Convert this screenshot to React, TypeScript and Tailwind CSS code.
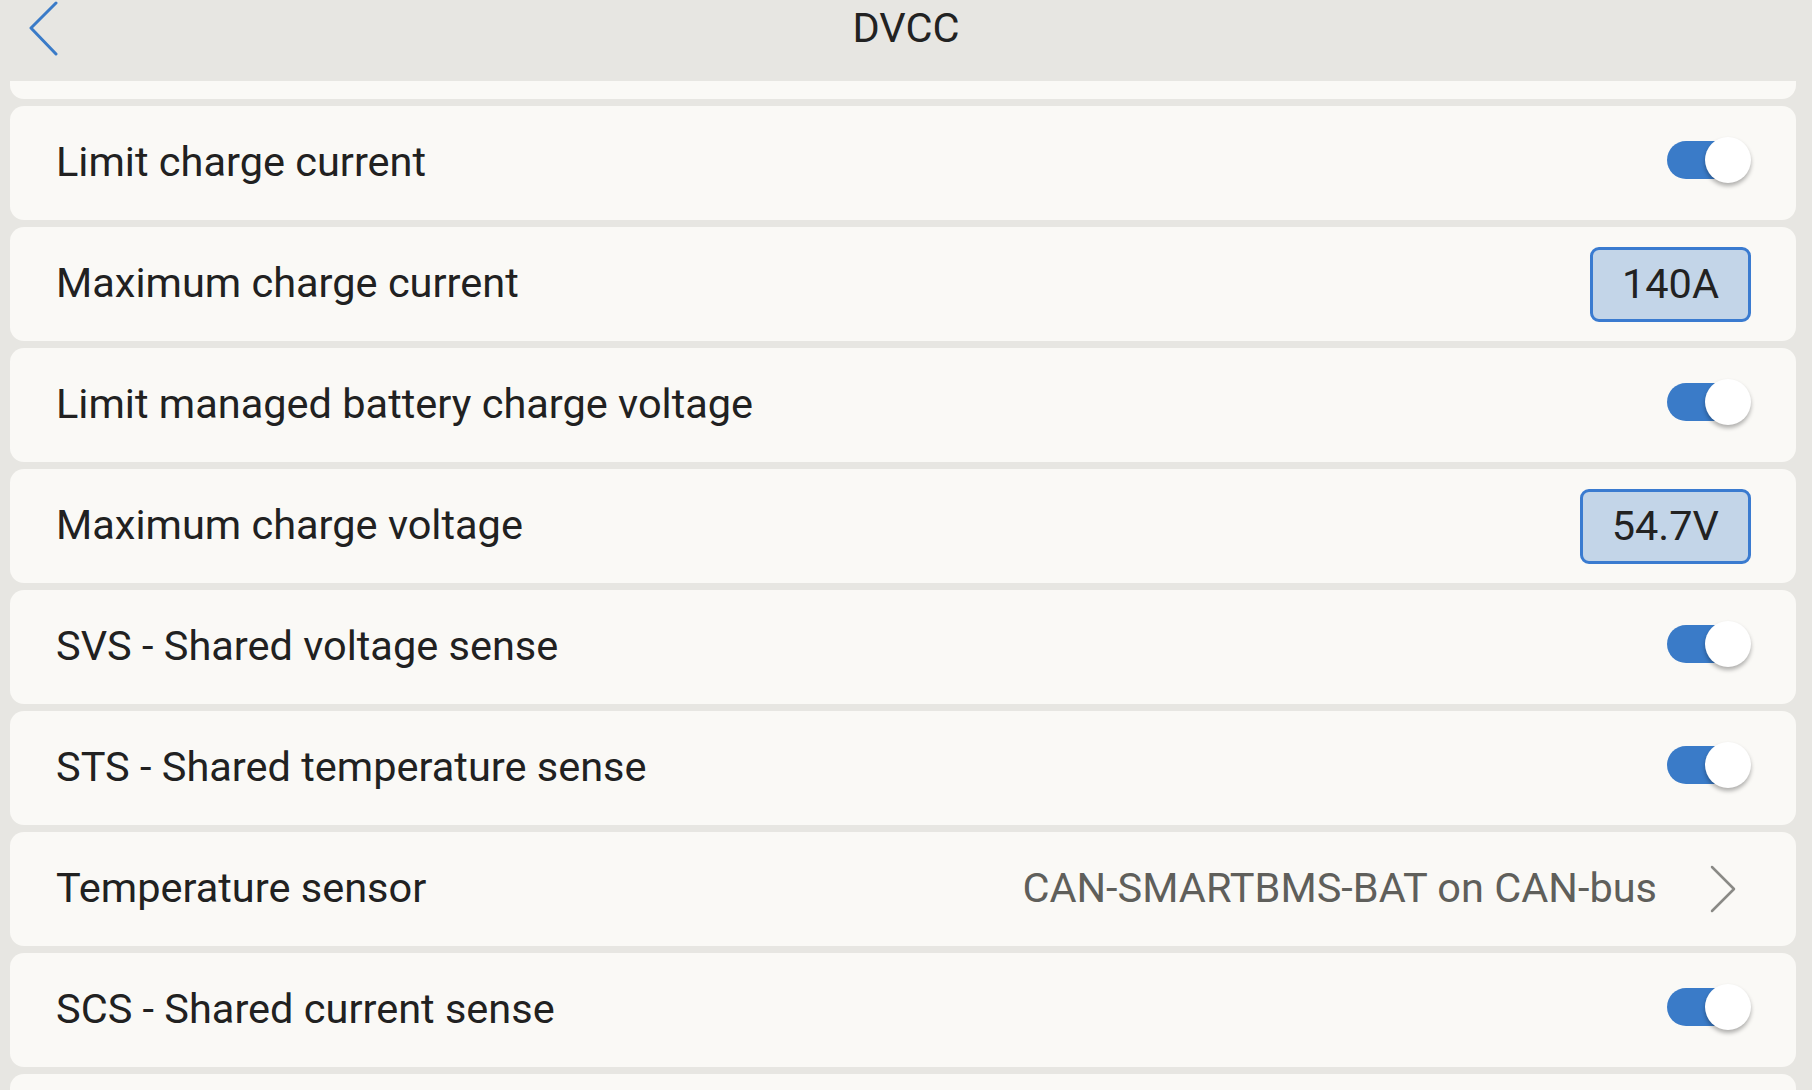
import React from 'react';

type Row =
  | { kind: 'toggle'; label: string; on: boolean }
  | { kind: 'value'; label: string; value: string }
  | { kind: 'link'; label: string; value: string };

const ROWS: Row[] = [
  { kind: 'toggle', label: 'Limit charge current', on: true },
  { kind: 'value', label: 'Maximum charge current', value: '140A' },
  { kind: 'toggle', label: 'Limit managed battery charge voltage', on: true },
  { kind: 'value', label: 'Maximum charge voltage', value: '54.7V' },
  { kind: 'toggle', label: 'SVS - Shared voltage sense', on: true },
  { kind: 'toggle', label: 'STS - Shared temperature sense', on: true },
  { kind: 'link', label: 'Temperature sensor', value: 'CAN-SMARTBMS-BAT on CAN-bus' },
  { kind: 'toggle', label: 'SCS - Shared current sense', on: true },
];

function Toggle({ on }: { on: boolean }) {
  return (
    <div className="relative w-[84px] h-[46px] mb-[6px] shrink-0">
      <div
        className={`absolute left-0 top-[4px] w-[72px] h-[38px] rounded-full ${
          on ? 'bg-[#3a7bc8]' : 'bg-[#c9c8c4]'
        }`}
      />
      <div
        className={`absolute top-0 w-[46px] h-[46px] rounded-full bg-white shadow-[0_3px_4px_rgba(0,0,0,0.3)] ${
          on ? 'right-0' : 'left-0'
        }`}
      />
    </div>
  );
}

function ValueBox({ value }: { value: string }) {
  return (
    <div className="h-[75px] px-[29px] flex items-center rounded-[9px] border-[3px] border-[#3a7bd0] bg-[#c3d5e8] text-[41.5px] leading-none text-[#222]">
      {value}
    </div>
  );
}

function Chevron({ className }: { className?: string }) {
  return (
    <svg className={className} width="28" height="48" viewBox="0 0 28 48" fill="none">
      <polyline points="3,2 25,24 3,46" stroke="currentColor" strokeWidth="2.5" strokeLinecap="round" strokeLinejoin="round" />
    </svg>
  );
}

function Card({ row }: { row: Row }) {
  return (
    <div className="h-[114px] rounded-[14px] bg-[#faf9f6] flex items-center justify-between pl-[46px] pr-[45px]">
      <span className="pb-[2px] text-[41.5px] leading-none text-[#212121]">{row.label}</span>
      {row.kind === 'toggle' && <Toggle on={row.on} />}
      {row.kind === 'value' && <ValueBox value={row.value} />}
      {row.kind === 'link' && (
        <div className="flex items-center gap-[52px] pr-[14px]">
          <span className="pb-[2px] text-[41.5px] leading-none text-[#5f5f5b]">{row.value}</span>
          <Chevron className="text-[#8a8a86]" />
        </div>
      )}
    </div>
  );
}

export default function App() {
  return (
    <div
      className="w-[1812px] h-[1090px] overflow-hidden bg-[#e7e6e2]"
      style={{ fontFamily: 'Roboto, "Noto Sans", sans-serif' }}
    >
      <header className="h-[81px] grid grid-cols-[1fr_auto_1fr] items-start">
        <div className="pl-[28px]">
          <svg width="32" height="56" viewBox="0 0 32 56" fill="none" className="text-[#3a7bc8]">
            <polyline points="28,3 3,28 28,54" stroke="currentColor" strokeWidth="3" strokeLinecap="round" strokeLinejoin="round" />
          </svg>
        </div>
        <h1 className="pt-[7px] text-[41.5px] leading-none text-[#222]">DVCC</h1>
        <div />
      </header>
      <div className="pl-[10px] pr-[16px] flex flex-col gap-[7px]">
        <div className="h-[18px] rounded-b-[14px] bg-[#faf9f6]" />
        {ROWS.map((row) => (
          <Card key={row.label} row={row} />
        ))}
        <div className="h-[114px] rounded-[14px] bg-[#faf9f6]" />
      </div>
    </div>
  );
}
